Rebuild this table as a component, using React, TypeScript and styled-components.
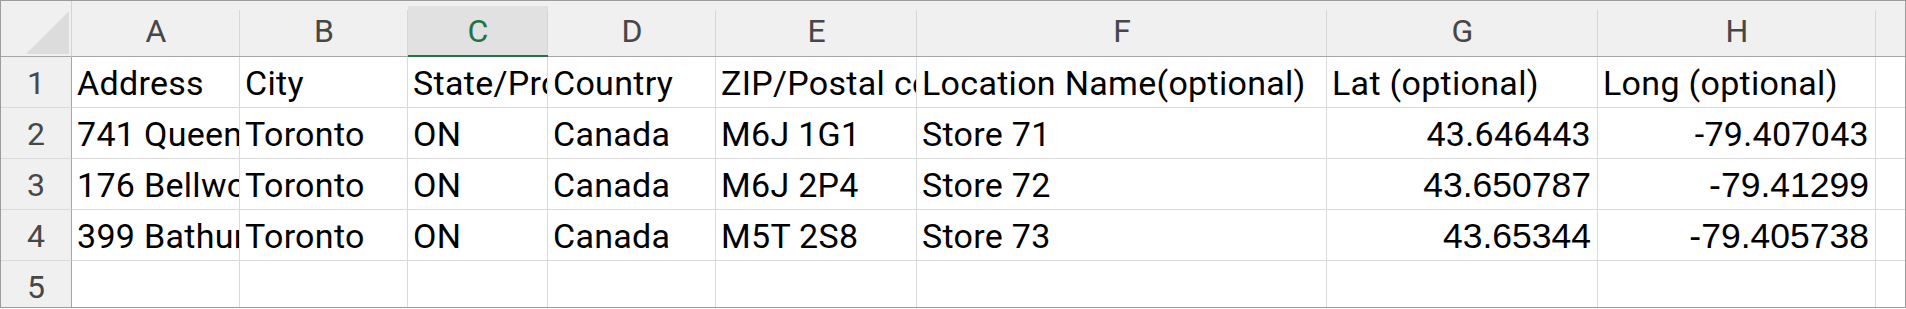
import React from 'react';
import styled, { createGlobalStyle } from 'styled-components';

type Cell = { text: string; numeric?: boolean; classic?: boolean };

const COLUMNS = ['A', 'B', 'C', 'D', 'E', 'F', 'G', 'H', ''];
const SELECTED_COLUMN = 'C';

const ROWS: Cell[][] = [
  [
    { text: 'Address' },
    { text: 'City' },
    { text: 'State/Province' },
    { text: 'Country' },
    { text: 'ZIP/Postal code' },
    { text: 'Location Name(optional)' },
    { text: 'Lat (optional)' },
    { text: 'Long (optional)' },
  ],
  [
    { text: '741 Queen St W' },
    { text: 'Toronto' },
    { text: 'ON' },
    { text: 'Canada' },
    { text: 'M6J 1G1' },
    { text: 'Store 71' },
    { text: '43.646443', numeric: true },
    { text: '-79.407043', numeric: true },
  ],
  [
    { text: '176 Bellwoods Ave' },
    { text: 'Toronto' },
    { text: 'ON' },
    { text: 'Canada' },
    { text: 'M6J 2P4' },
    { text: 'Store 72' },
    { text: '43.650787', numeric: true, classic: true },
    { text: '-79.41299', numeric: true, classic: true },
  ],
  [
    { text: '399 Bathurst St' },
    { text: 'Toronto' },
    { text: 'ON' },
    { text: 'Canada' },
    { text: 'M5T 2S8' },
    { text: 'Store 73' },
    { text: '43.65344', numeric: true, classic: true },
    { text: '-79.405738', numeric: true, classic: true },
  ],
  [],
];

const App: React.FC = (): JSX.Element => {
  return (
    <>
      <GlobalStyle />
      <Sheet>
        <Corner>
          <CornerMark viewBox="0 0 43 43">
            <polygon points="43,0 43,43 0,43" fill="#dcdcdc" />
          </CornerMark>
        </Corner>
        {COLUMNS.map((col, i) => (
          <ColHeader key={`h${i}`} $selected={col === SELECTED_COLUMN}>
            <HeaderLabel $selected={col === SELECTED_COLUMN} $last={i === COLUMNS.length - 1}>
              {col}
            </HeaderLabel>
          </ColHeader>
        ))}
        {ROWS.map((row, r) => (
          <React.Fragment key={`r${r}`}>
            <RowHeader $last={r === ROWS.length - 1}>{r + 1}</RowHeader>
            {COLUMNS.map((_, c) => {
              const cell = row[c];
              return (
                <DataCell
                  key={`c${r}-${c}`}
                  $numeric={!!cell?.numeric}
                  $classic={!!cell?.classic}
                  $lastRow={r === ROWS.length - 1}
                  $lastCol={c === COLUMNS.length - 1}
                >
                  {cell?.text}
                </DataCell>
              );
            })}
          </React.Fragment>
        ))}
      </Sheet>
    </>
  );
};

const GlobalStyle = createGlobalStyle`
  html, body {
    margin: 0;
    padding: 0;
    background: #ffffff;
  }
  body {
    font-family: Roboto, "Liberation Sans", sans-serif;
  }
`;

const Sheet = styled.div`
  box-sizing: border-box;
  width: 1906px;
  height: 308px;
  border: 1px solid #9c9c9c;
  display: grid;
  grid-template-columns: 71px 168px 168px 140px 168px 201px 410px 271px 278px 1fr;
  grid-template-rows: 56px repeat(4, 51px) 1fr;
  overflow: hidden;
  background: #ffffff;
`;

const Corner = styled.div`
  box-sizing: border-box;
  background: #f0f0f0;
  border-bottom: 1px solid #a6a6a6;
  border-right: 1px solid #d4d4d4;
  display: flex;
  align-items: flex-end;
  justify-content: flex-end;
  padding: 0 2px 2px 0;
`;

const CornerMark = styled.svg`
  width: 43px;
  height: 43px;
  display: block;
`;

const ColHeader = styled.div<{ $selected: boolean }>`
  box-sizing: border-box;
  background: #f0f0f0;
  padding-top: 5px;
  border-bottom: ${(p) => (p.$selected ? '2px solid #217346' : '1px solid #a6a6a6')};
`;

const HeaderLabel = styled.div<{ $selected: boolean; $last: boolean }>`
  height: 100%;
  display: flex;
  align-items: center;
  justify-content: center;
  font-size: 32px;
  line-height: 1;
  color: ${(p) => (p.$selected ? '#217346' : '#474747')};
  background: ${(p) =>
    p.$last
      ? 'transparent'
      : `linear-gradient(#d6d6d6, #d6d6d6) right 0 bottom 0 / 1px calc(100% - 4px) no-repeat, ${
          p.$selected ? '#e1e1e1' : 'transparent'
        }`};
`;

const RowHeader = styled.div<{ $last: boolean }>`
  box-sizing: border-box;
  background: #f0f0f0;
  border-right: 1px solid #a6a6a6;
  border-bottom: ${(p) => (p.$last ? 'none' : '1px solid #dadada')};
  text-align: center;
  font-size: 32px;
  line-height: 48px;
  padding-top: 2px;
  color: #474747;
`;

const DataCell = styled.div<{ $numeric: boolean; $classic: boolean; $lastRow: boolean; $lastCol: boolean }>`
  box-sizing: border-box;
  border-right: ${(p) => (p.$lastCol ? 'none' : '1px solid #dadada')};
  border-bottom: ${(p) => (p.$lastRow ? 'none' : '1px solid #dadada')};
  padding: 2px 6px 0 5px;
  overflow: hidden;
  white-space: nowrap;
  text-align: ${(p) => (p.$numeric ? 'right' : 'left')};
  font-family: ${(p) => (p.$classic ? '"Liberation Sans", Arial, sans-serif' : 'Roboto, "Liberation Sans", sans-serif')};
  font-size: ${(p) => (p.$classic ? '35.5px' : '34px')};
  letter-spacing: ${(p) => (p.$classic ? '0' : '0.3px')};
  line-height: 48px;
  color: #000000;
`;

export default App;
